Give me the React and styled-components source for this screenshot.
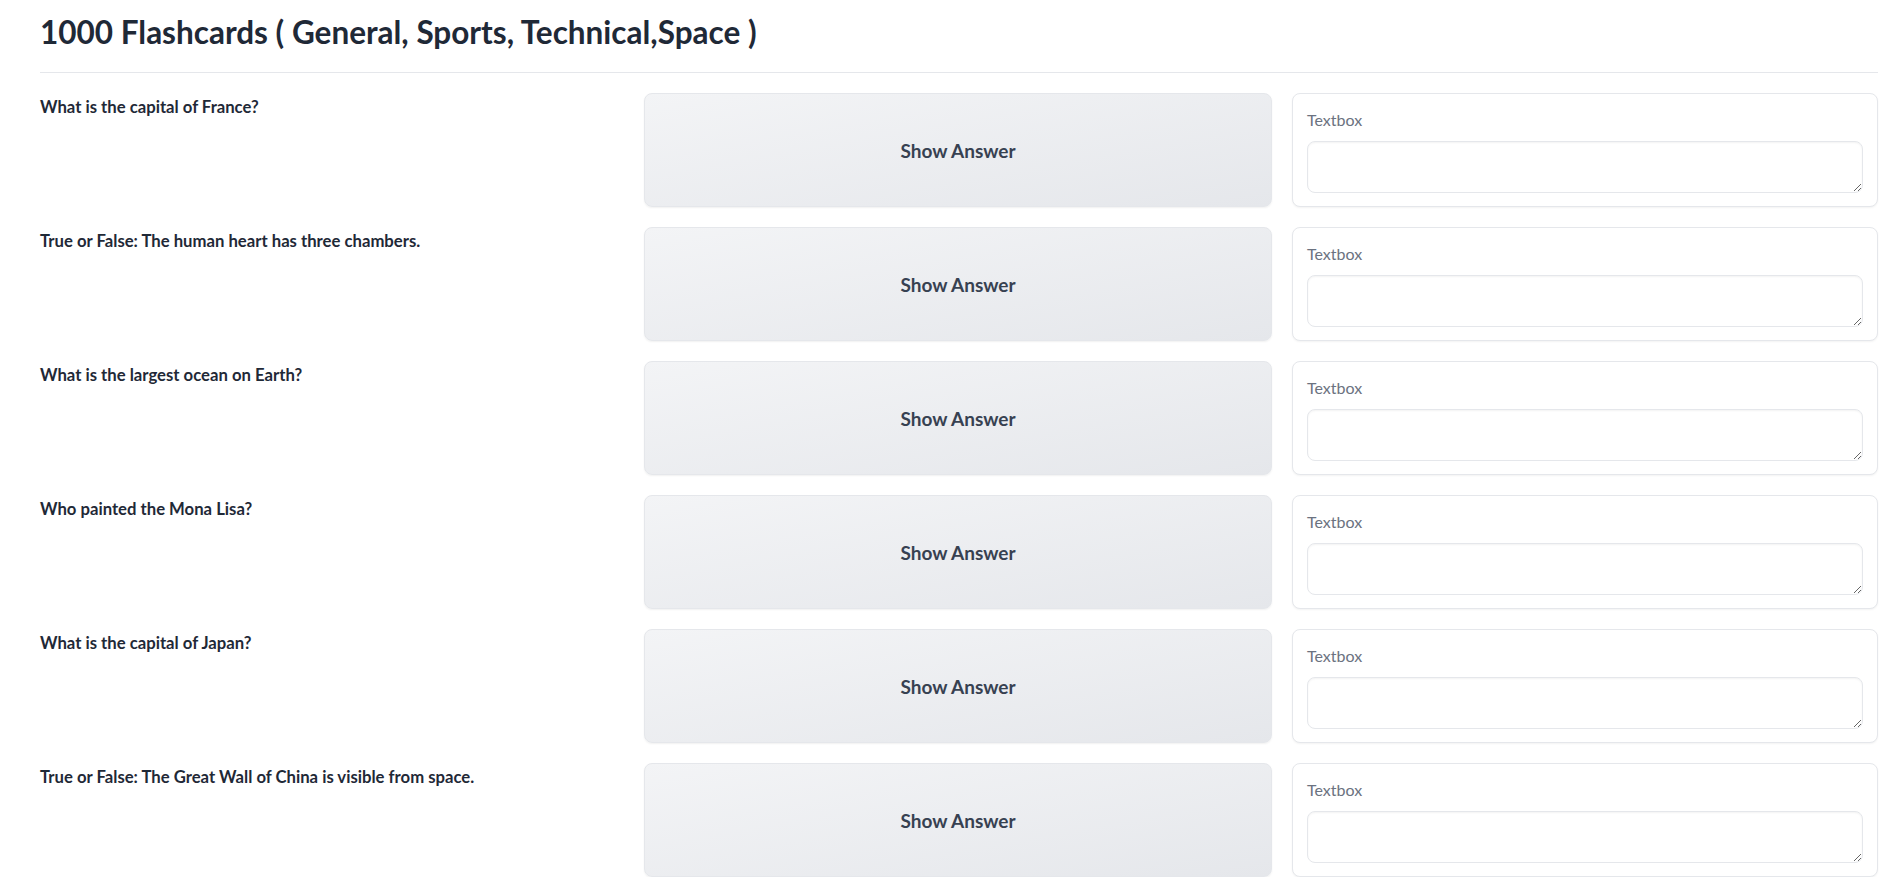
import React from "react";
import styled, { createGlobalStyle } from "styled-components";

const questions = [
  "What is the capital of France?",
  "True or False: The human heart has three chambers.",
  "What is the largest ocean on Earth?",
  "Who painted the Mona Lisa?",
  "What is the capital of Japan?",
  "True or False: The Great Wall of China is visible from space.",
];

const GlobalStyle = createGlobalStyle`
  html, body {
    margin: 0;
    padding: 0;
    background: #ffffff;
    overflow: hidden;
  }
  body {
    font-family: Lato, "Noto Sans", sans-serif;
    color: #1f2937;
  }
  * { box-sizing: border-box; }
`;

const Page = styled.main`
  padding: 0 18px 0 40px;
`;

const Header = styled.div`
  border-bottom: 1px solid #e5e7eb;
  padding: 12px 0 20px;
  margin-bottom: 20px;
`;

const Title = styled.h1`
  margin: 0;
  font-size: 31.5px;
  font-weight: 700;
  line-height: 40px;
  color: #1f2937;
`;

const Cards = styled.div`
  display: flex;
  flex-direction: column;
  gap: 20px;
`;

const Row = styled.div`
  display: grid;
  grid-template-columns: 584px 628px 586px;
  gap: 20px;
  height: 114px;
`;

const Question = styled.p`
  margin: 0;
  padding-top: 2px;
  font-size: 16.7px;
  font-weight: 700;
  line-height: 24px;
  color: #1f2937;
`;

const AnswerButton = styled.button`
  border: 1px solid #e5e7eb;
  border-radius: 8px;
  background: linear-gradient(to bottom right, #f3f4f6, #e5e7eb);
  box-shadow: 0 1px 2px rgba(0, 0, 0, 0.06);
  font-family: inherit;
  font-size: 19px;
  font-weight: 700;
  color: #374151;
  padding-top: 2px;
  cursor: pointer;
`;

const Card = styled.label`
  display: flex;
  flex-direction: column;
  border: 1px solid #e5e7eb;
  border-radius: 8px;
  background: #ffffff;
  box-shadow: 0 1px 2px rgba(0, 0, 0, 0.05);
  padding: 15px 14px 13px;
`;

const Label = styled.span`
  font-size: 16px;
  line-height: 22px;
  color: #6b7280;
  margin-bottom: 10px;
`;

const Area = styled.textarea`
  height: 52px;
  width: 100%;
  border: 1px solid #e5e7eb;
  border-radius: 8px;
  box-shadow: inset 0 1px 2px rgba(0, 0, 0, 0.05);
  background: #ffffff;
  resize: vertical;
  font-family: inherit;
  font-size: 15px;
  padding: 8px 12px;
  outline: none;
`;

function Flashcard({ text }) {
  return (
    <Row>
      <Question>{text}</Question>
      <AnswerButton>Show Answer</AnswerButton>
      <Card>
        <Label>Textbox</Label>
        <Area rows={2} />
      </Card>
    </Row>
  );
}

export default function App() {
  return (
    <>
      <GlobalStyle />
      <Page>
        <Header>
          <Title>1000 Flashcards ( General, Sports, Technical,Space )</Title>
        </Header>
        <Cards>
          {questions.map((q) => (
            <Flashcard key={q} text={q} />
          ))}
        </Cards>
      </Page>
    </>
  );
}
